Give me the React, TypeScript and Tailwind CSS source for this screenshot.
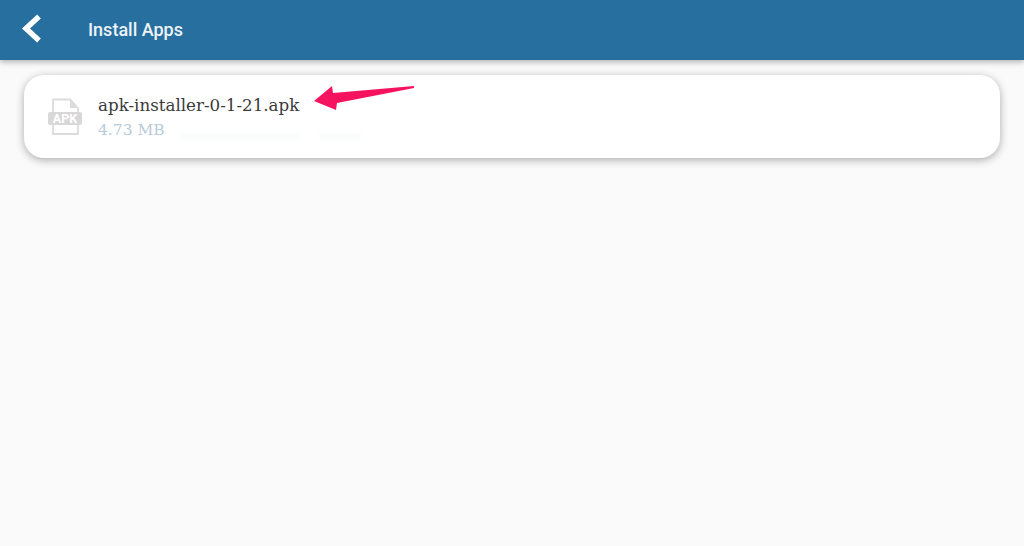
import React from 'react';

const FileIcon = () => (
  <svg width="34" height="38" viewBox="0 0 34 38" className="shrink-0">
    <path d="M5 14V1.5h17L30 10v4M30 27v9H5v-9" fill="none" stroke="#dcdcdc" strokeWidth="1.8" />
    <path d="M22 1.5V10h8z" fill="#dcdcdc" />
    <rect x="0" y="14" width="34" height="13" rx="2" fill="#d8d8d8" />
    <text x="17" y="25" textAnchor="middle" fill="#ffffff" fontSize="12.5" fontWeight="700" className="font-['Roboto',sans-serif]">APK</text>
  </svg>
);

export default function App() {
  return (
    <div className="relative flex flex-col w-[1024px] h-[546px] overflow-hidden bg-[#fafafa]">
      {/* header */}
      <div className="flex items-center h-[60px] shrink-0 bg-[#266f9f] shadow-[0_2px_6px_rgba(0,0,0,0.3)]">
        <svg width="24" height="32" viewBox="0 0 24 32" className="ml-[21px] shrink-0">
          <path d="M18 2.5 5 14.5 18 26.5" fill="none" stroke="#ffffff" strokeWidth="5.5" />
        </svg>
        <span className="ml-[43px] mb-[2px] text-[18px] font-medium text-[#eef3f7] font-['Roboto',sans-serif]">Install Apps</span>
      </div>

      {/* file row */}
      <div className="flex items-center h-[83px] mt-[15px] mx-[24px] pl-[24px] rounded-[20px] bg-white shadow-[0_2px_9px_rgba(0,0,0,0.32)]">
        <FileIcon />
        <div className="flex flex-col ml-[16px]">
          <span className="text-[16.7px] leading-[22px] text-[#3a3a3a] font-['DejaVu_Serif',serif]">apk-installer-0-1-21.apk</span>
          <span className="mt-[4px] text-[15.5px] leading-[20px] text-[#b9cbd9] font-['DejaVu_Serif',serif]">4.73 MB</span>
        </div>
      </div>

      {/* faint smudge under the file name */}
      <div className="absolute left-[180px] top-[134px] w-[120px] h-[5px] bg-[#f9fbfc] blur-[2px]" />
      <div className="absolute left-[318px] top-[134px] w-[44px] h-[5px] bg-[#f9fbfc] blur-[2px]" />

      {/* arrow annotation */}
      <svg width="104" height="30" viewBox="0 0 104 30" className="absolute left-[312px] top-[84px]">
        <path d="M2 17 20 2 21 9 102 2 102 4 25 19 24 26z" fill="#f5135f" />
      </svg>
    </div>
  );
}
